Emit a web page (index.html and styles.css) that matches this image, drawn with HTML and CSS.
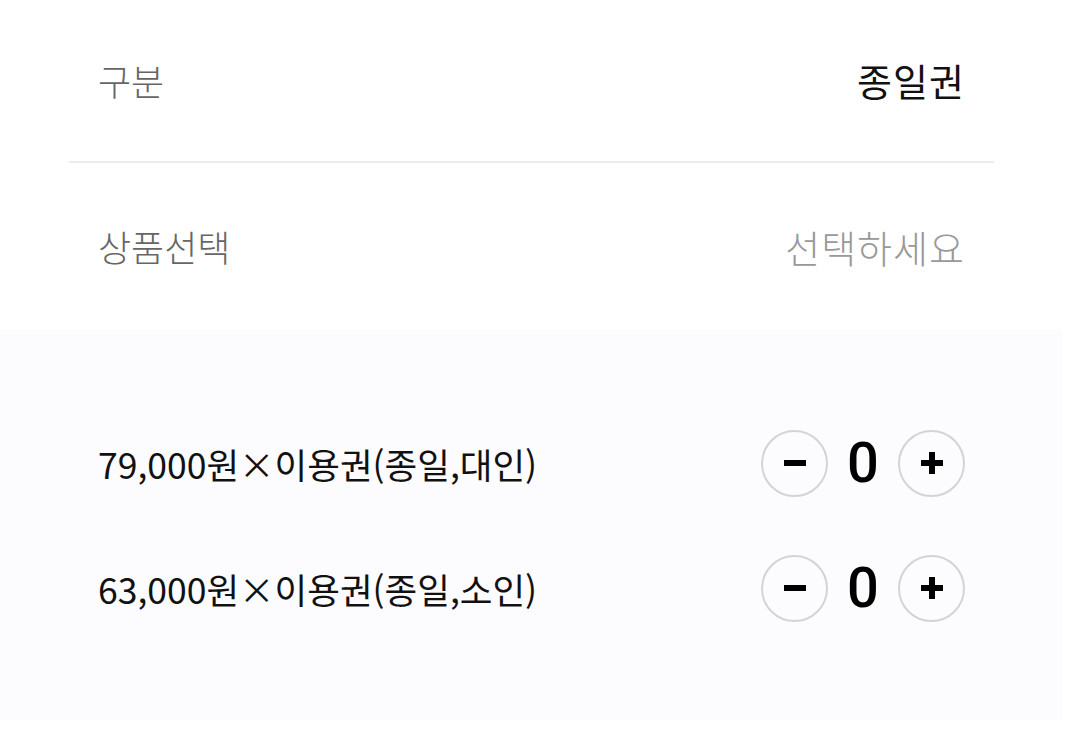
FILE: index.html
```html
<!DOCTYPE html>
<html lang="ko">
<head>
  <meta charset="UTF-8">
  <meta name="viewport" content="width=device-width, initial-scale=1.0">
  <title>이용권 선택</title>
  <link rel="stylesheet" href="styles.css">
</head>
<body>
  <div class="sheet">
    <!-- 구분 -->
    <div class="field field-first">
      <span class="field-label">구분</span>
      <span class="field-value">종일권</span>
    </div>

    <!-- 상품선택 -->
    <div class="field">
      <span class="field-label">상품선택</span>
      <span class="field-value placeholder">선택하세요</span>
    </div>

    <!-- 수량 -->
    <div class="ticket-panel">
      <div class="ticket-row">
        <span class="ticket-name">79,000원×이용권(종일,대인)</span>
        <div class="counter">
          <button class="counter-btn" aria-label="빼기">
            <svg width="24" height="24" viewBox="0 0 24 24"><rect x="1" y="9" width="22" height="6" fill="#000"/></svg>
          </button>
          <span class="counter-value">0</span>
          <button class="counter-btn" aria-label="더하기">
            <svg width="24" height="24" viewBox="0 0 24 24"><rect x="1" y="9" width="22" height="6" fill="#000"/><rect x="9" y="1" width="6" height="22" fill="#000"/></svg>
          </button>
        </div>
      </div>
      <div class="ticket-row">
        <span class="ticket-name">63,000원×이용권(종일,소인)</span>
        <div class="counter">
          <button class="counter-btn" aria-label="빼기">
            <svg width="24" height="24" viewBox="0 0 24 24"><rect x="1" y="9" width="22" height="6" fill="#000"/></svg>
          </button>
          <span class="counter-value">0</span>
          <button class="counter-btn" aria-label="더하기">
            <svg width="24" height="24" viewBox="0 0 24 24"><rect x="1" y="9" width="22" height="6" fill="#000"/><rect x="9" y="1" width="6" height="22" fill="#000"/></svg>
          </button>
        </div>
      </div>
    </div>
  </div>
</body>
</html>
```

FILE: styles.css
```css
/* Reset */
* {
  margin: 0;
  padding: 0;
  box-sizing: border-box;
}

body {
  font-family: "Noto Sans CJK KR", "Noto Sans", sans-serif;
  background: #fff;
  color: #111;
}

.sheet {
  width: 1063px;
}

/* Label / value rows */
.field {
  display: flex;
  justify-content: space-between;
  align-items: center;
  height: 166px;
  margin: 0 69px;
  padding: 0 29px;
  font-size: 36px;
  font-weight: 300;
}

.field-first {
  height: 163px;
  padding-bottom: 2px;
  border-bottom: 2px solid #ececec;
}

.field-label {
  color: #666;
}

.field-value {
  color: #111;
  font-size: 38px;
  letter-spacing: 1px;
  font-weight: 400;
}

.field-value.placeholder {
  color: #999;
  font-weight: 300;
}

/* Ticket quantities */
.ticket-panel {
  background: #fcfbfd;
  padding: 101px 98px 99px;
  display: flex;
  flex-direction: column;
  gap: 59px;
}

.ticket-row {
  display: flex;
  justify-content: space-between;
  align-items: center;
  height: 66px;
}

.ticket-name {
  font-size: 35.5px;
  color: #111;
}

.counter {
  display: flex;
  align-items: center;
  gap: 8px;
}

.counter-btn {
  width: 67px;
  height: 67px;
  border-radius: 50%;
  border: 2px solid #d4d4d4;
  background: transparent;
  display: flex;
  justify-content: center;
  align-items: center;
  cursor: pointer;
}

.counter-value {
  width: 54px;
  text-align: center;
  font-family: Roboto, sans-serif;
  font-weight: 500;
  font-size: 56px;
  line-height: 1;
  color: #000;
}
```
